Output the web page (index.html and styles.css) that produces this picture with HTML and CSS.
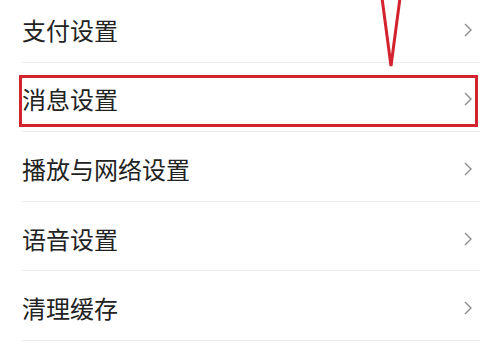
FILE: index.html
```html
<!DOCTYPE html>
<html lang="zh-CN">
<head>
<meta charset="utf-8">
<link rel="stylesheet" href="styles.css">
</head>
<body>
<div class="page">
  <ul class="list">
    <li class="row"><span class="label">支付设置</span><svg class="chev" viewBox="0 0 8 14" width="8" height="14"><polyline points="1,1 7,7 1,13"/></svg></li>
    <li class="row highlighted"><span class="label">消息设置</span><svg class="chev" viewBox="0 0 8 14" width="8" height="14"><polyline points="1,1 7,7 1,13"/></svg><div class="mark"></div></li>
    <li class="row"><span class="label">播放与网络设置</span><svg class="chev" viewBox="0 0 8 14" width="8" height="14"><polyline points="1,1 7,7 1,13"/></svg></li>
    <li class="row"><span class="label">语音设置</span><svg class="chev" viewBox="0 0 8 14" width="8" height="14"><polyline points="1,1 7,7 1,13"/></svg></li>
    <li class="row"><span class="label">清理缓存</span><svg class="chev" viewBox="0 0 8 14" width="8" height="14"><polyline points="1,1 7,7 1,13"/></svg></li>
  </ul>
  <svg class="arrow" viewBox="0 0 489 80" width="489" height="80"><polyline points="382,-2 391,66 400,-2"/></svg>
</div>
</body>
</html>
```
FILE: styles.css
```css
html, body {
  margin: 0;
  padding: 0;
  background: #ffffff;
}
.page {
  position: relative;
  width: 489px;
  height: 352px;
  overflow: hidden;
  font-family: "Noto Sans CJK SC", "Noto Sans", sans-serif;
}
.list {
  list-style: none;
  margin: -7px 9px 0 22px;
  padding: 0;
}
.row {
  position: relative;
  display: flex;
  align-items: center;
  justify-content: space-between;
  box-sizing: border-box;
  height: 69.6px;
  padding: 5px 8px 0 0;
  border-bottom: 1px solid #ececec;
}
.label {
  font-size: 24px;
  line-height: 30px;
  color: #222222;
}
.chev {
  display: block;
}
.chev polyline {
  fill: none;
  stroke: #8c8c8c;
  stroke-width: 1.4;
}
.mark {
  position: absolute;
  left: -3px;
  top: 12px;
  width: 459px;
  height: 52px;
  box-sizing: border-box;
  border: 3px solid #d2232f;
}
.arrow {
  position: absolute;
  left: 0;
  top: 0;
}
.arrow polyline {
  fill: none;
  stroke: #d2232f;
  stroke-width: 3;
  stroke-linejoin: miter;
}
```
